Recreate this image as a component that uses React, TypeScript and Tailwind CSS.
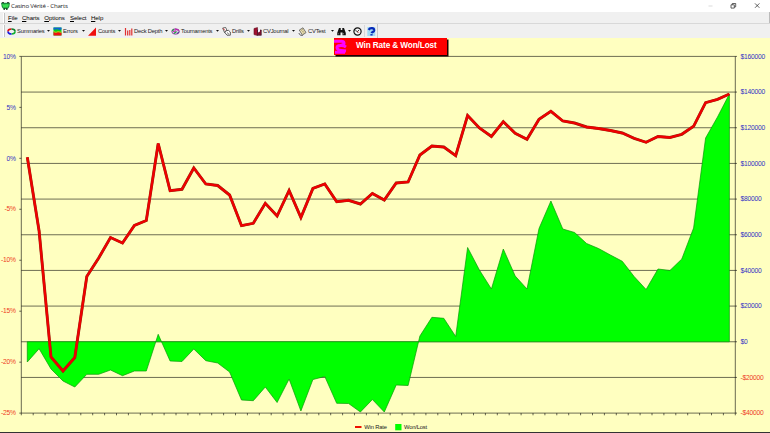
import type { ReactNode } from 'react';

const STEP = 11.9;
const LEFT = 21.3;
const RIGHT = 735.3;
const TOP = 18.4;
const ROW = 35.67;
const ZERO = TOP + ROW * 8;

// chart y positions, one per session
const winRate = [
  119.3, 193, 319, 333, 319.5, 238.5, 220, 199.5, 205, 187.5, 182.5, 105.5, 152.7, 151.3, 130,
  146, 147.5, 157, 187.7, 185.3, 165.3, 178, 152.5, 179.5, 150.5, 146, 163.7, 162.3, 166, 155.5,
  162, 145, 144, 117, 108, 109, 117.7, 77.5, 90, 98.5, 83.7, 95.3, 101.3, 81.3, 73.3,
  83, 85, 89, 90.5, 92.5, 95, 100.3, 104.3, 98.5, 99.5, 96.3, 88.3, 64.7, 61.3, 56,
];

const wonLost = [
  324, 310.7, 331, 343, 349, 336.3, 336.3, 332, 337.7, 333, 333, 296.3, 323, 323.5, 311,
  322.7, 325, 334, 362, 362.7, 349, 364.5, 341, 373, 341.5, 338.5, 365.3, 365.5, 374, 361.5,
  374, 347, 347.5, 298, 279.3, 280.3, 298.5, 209.5, 232, 251, 211, 238, 251, 190.5, 163,
  191, 194.5, 205.5, 210.5, 217, 223.3, 238.5, 251.5, 231, 232.5, 221, 190, 100, 79, 56,
];

const toPoints = (ys: number[]) =>
  ys.map((y, i) => `${(LEFT + STEP / 2 + i * STEP).toFixed(1)},${y}`).join(' ');

const percents = [10, 5, 0, -5, -10, -15, -20, -25];
const dollars = [160000, 140000, 120000, 100000, 80000, 60000, 40000, 20000, 0, -20000, -40000];

function Icon({ children }: { children: ReactNode }) {
  return (
    <svg className="h-[9px] w-[9px] shrink-0" viewBox="0 0 9 9" fill="none">
      {children}
    </svg>
  );
}

const tools = [
  {
    label: 'Summaries',
    width: 'w-[46px]',
    icon: (
      <>
        <path d="M1 4.5C1 2.8 2.5 2 4.5 2" stroke="#e01010" strokeWidth="1.6" />
        <path d="M4.5 2C6.8 2 8 3 8 4.5" stroke="#108030" strokeWidth="1.6" />
        <path d="M8 4.5C8 6.2 6.5 7 4.5 7" stroke="#10b030" strokeWidth="1.6" />
        <path d="M4.5 7C2.2 7 1 6 1 4.5" stroke="#1818e0" strokeWidth="1.6" />
      </>
    ),
  },
  {
    label: 'Errors',
    width: 'w-[35px]',
    icon: (
      <>
        <path d="M.5.5h8v8h-8z" fill="#00d020" />
        <path d="M.5.5h8v2l-2 .5-2-.7-4 .4z" fill="#1060d8" />
        <path d="M.5 5l2.5.7 2-.6 3.5.6v2.8h-8z" fill="#f01010" />
        <path d="M.5 4.6l2.5.7 2-.6 3.5.6" stroke="#d0c010" />
      </>
    ),
  },
  { label: 'Counts', width: 'w-[36px]', icon: <path d="M0 8.7L8 .6v8.1z" fill="#f01010" /> },
  {
    label: 'Deck Depth',
    width: 'w-[47px]',
    icon: <path d="M1.5 1v7.5M3.7 3.5v5M5.8 3v5.5M7.8 1.5v7" stroke="#e03030" strokeWidth="1.2" />,
  },
  {
    label: 'Tournaments',
    width: 'w-[51px]',
    icon: (
      <>
        <ellipse cx="4.6" cy="4.5" rx="3.8" ry="2.7" fill="#d8d8e8" stroke="#9040a0" />
        <path d="M1 4l2-1.7M3 6.5l2.5-2" stroke="#20a040" strokeWidth="1.3" />
        <path d="M4 2l3.8 1.4M2 4.5l3-.7" stroke="#c020b0" strokeWidth="1.2" />
        <path d="M6 6.5l2-1.7" stroke="#303080" />
      </>
    ),
  },
  {
    label: 'Drills',
    width: 'w-[31px]',
    icon: (
      <>
        <path d="M.7 1l3-.5 1.3 3-2.5 2z" fill="#fff" stroke="#444" strokeWidth=".8" />
        <path d="M1.2 1.4l1.6 2" stroke="#d03030" />
        <path d="M3.4 4l3-.7L8.3 5v3.2H5L3 5.7z" fill="#fff" stroke="#333" strokeWidth=".8" />
        <path d="M5 5.5l2 1.8" stroke="#333" strokeWidth=".7" />
      </>
    ),
  },
  {
    label: 'CVJournal',
    width: 'w-[45px]',
    icon: (
      <>
        <path d="M1 1.5L4.5.6v7.9L1 7.6z" fill="#a01030" stroke="#601020" strokeWidth=".6" />
        <path d="M4.5 3h3.8v5.3H4.5z" fill="#801030" stroke="#301020" strokeWidth=".6" />
        <path d="M5 2.5L7 1.5v3L5 5.5z" fill="#f4f4ff" />
      </>
    ),
  },
  {
    label: 'CVTest',
    width: 'w-[38.5px]',
    icon: (
      <>
        <path d="M1.3 3L5 .8l3 4.8-3.6 2.5z" fill="#eee4b8" stroke="#555" strokeWidth=".8" />
        <path d="M3 3.6l2-1.2M4 5l2-1.2M4.8 6.5l1.6-1" stroke="#887850" strokeWidth=".6" />
        <path d="M.8 6l1.5 2.2 2.4.3" stroke="#444" strokeWidth=".8" />
      </>
    ),
  },
];

function Arrow() {
  return (
    <svg className="h-[2px] w-[3px] shrink-0" viewBox="0 0 3 2">
      <path d="M0 0h3L1.5 1.8z" fill="#111" />
    </svg>
  );
}

function Chart() {
  return (
    <svg className="block h-[394px] w-[770px]" viewBox="0 0 770 394" fontSize="6.7" letterSpacing="-.2">
      <g stroke="#000" strokeOpacity=".68" strokeWidth=".85">
        {dollars.map((d, i) => (
          <path key={d} d={`M${LEFT} ${TOP + i * ROW}H${RIGHT + 1.7}`} />
        ))}
      </g>

      <polygon
        points={`${LEFT + STEP / 2},${ZERO} ${toPoints(wonLost)} ${RIGHT - STEP / 2},${ZERO}`}
        fill="#00ff00"
        stroke="#089808"
        strokeWidth=".7"
      />

      <g stroke="#000" strokeOpacity=".7" strokeWidth=".85">
        <path d={`M${LEFT} ${TOP}V${TOP + ROW * 10}M${RIGHT} ${TOP}V${TOP + ROW * 10}`} />
        {percents.map((p, i) => (
          <path key={p} d={`M${LEFT - 2} ${TOP + i * 50.96}h2`} />
        ))}
        {Array.from({ length: 61 }, (_, i) => (
          <path key={i} d={`M${LEFT + i * STEP} ${TOP + ROW * 10}v2.2`} />
        ))}
      </g>

      <polyline points={toPoints(winRate)} fill="none" stroke="#8a2a10" strokeWidth="2.9" />
      <polyline points={toPoints(winRate)} fill="none" stroke="#ee0000" strokeWidth="2.3" />

      {percents.map((p, i) => (
        <text key={p} x="15.8" y={TOP + i * 50.96 + 2.2} textAnchor="end" fill={p < 0 ? '#ee3b22' : '#3030c4'}>
          {p}%
        </text>
      ))}
      {dollars.map((d, i) => (
        <text key={d} x="740.5" y={TOP + i * ROW + 2.2} fill={d < 0 ? '#ee3b22' : '#3030c4'}>
          {`${d < 0 ? '-' : ''}$${Math.abs(d)}`}
        </text>
      ))}

      <g fontSize="5.8" letterSpacing="-.18" fill="#222">
        <path d="M355 389h6.5" stroke="#ee1100" strokeWidth="2" />
        <text x="364.3" y="391.1">Win Rate</text>
        <path d="M395.2 386h6.3v6.3h-6.3z" fill="#00ff00" />
        <text x="404" y="391.1">Won/Lost</text>
      </g>
    </svg>
  );
}

export default function App() {
  return (
    <div className="flex h-[433px] w-[770px] flex-col overflow-hidden border-b border-[#333] bg-[#ffffc0] font-['Liberation_Sans',Arial,sans-serif] text-black">
      <header className="flex h-[12px] shrink-0 items-center bg-white pl-[1px]">
        <svg className="h-[9px] w-[9px]" viewBox="0 0 9 9">
          <path d="M0 .7h9L8.3 5 6 8 4.5 6.5 3 8 .8 5z" fill="#189040" />
          <path d="M1 2l2.5.5L5.5 2 8 2.4 6.7 5.6H2.3z" fill="#38e050" />
          <path d="M1 .7h2M6 .7h2M3 8l1-2M6 8L5 6" stroke="#203020" />
        </svg>
        <h1 className="pt-[1px] pl-[1px] font-['Open_Sans',sans-serif] text-[6.1px] leading-none tracking-[-0.2px] text-[#222]">
          Casino Vérité - Charts
        </h1>
        <svg className="ml-auto h-[8px] w-[64px]" viewBox="0 0 64 8" fill="none" stroke="#222" strokeWidth=".7">
          <path d="M2.5 4h4" stroke="#ccc" />
          <path d="M25 2.8h3.3v3.3H25zM26.3 2.8V1.5h3.4v3.4h-1.4" />
          <path d="M49 1.4l4.4 4.4M53.4 1.4L49 5.8" />
        </svg>
      </header>

      <nav className="flex h-[12px] shrink-0 items-center border-b border-[#d8d8d8] bg-[#f0f0f0] pl-[3px] text-[6.1px] leading-none tracking-[-0.08px]">
        <span className="mr-[3px] h-[10px] w-[2px] border-r border-[#c4c4c4] bg-white" />
        <span className="w-[14px] pt-[1.5px]"><u>F</u>ile</span>
        <span className="w-[22.3px] pt-[1.5px]"><u>C</u>harts</span>
        <span className="w-[25.7px] pt-[1.5px]"><u>O</u>ptions</span>
        <span className="w-[21px] pt-[1.5px]"><u>S</u>elect</span>
        <span className="pt-[1.5px]"><u>H</u>elp</span>
        <span className="ml-auto h-full w-px bg-[#bbb]" />
      </nav>

      <div className="flex h-[14px] shrink-0 bg-[#f0f0f0]">
        <div className="flex h-full w-[378px] items-center border-r border-[#c8c8c8] pl-[3px]">
          <span className="mr-[2px] h-[12px] w-[2px] shrink-0 border-r border-[#c4c4c4] bg-white" />
          {tools.map((tool) => (
            <button key={tool.label} className={`flex shrink-0 items-center pr-[3px] ${tool.width}`}>
              <Icon>{tool.icon}</Icon>
              <span className="mr-auto pt-[1px] pl-[1px] text-[5.8px] leading-none tracking-[-0.2px] whitespace-nowrap text-[#222]">
                {tool.label}
              </span>
              <Arrow />
            </button>
          ))}
          <button className="flex w-[16px] shrink-0 items-center gap-[2px]">
            <Icon>
              <path d="M2 1h1.7v2h1.6V1H7l1.8 5v2.3H5.5V5.6h-2v2.7H.2V6z" fill="#111" />
              <path d="M1.3 6.3v1M6.5 6.3v1" stroke="#ddd" strokeWidth=".6" />
            </Icon>
            <Arrow />
          </button>
          <Icon>
            <circle cx="4.5" cy="4.5" r="3.6" fill="#f6f6f6" stroke="#111" strokeWidth="1.2" />
            <path d="M2.4 3.6l2.1.9 1.7-1.7M4.5 4.5v1" stroke="#111" strokeWidth=".8" />
            <path d="M4.5 4.3L6 5.8" stroke="#d02020" strokeWidth=".7" />
          </Icon>
          <span className="mx-[2px] h-[12px] w-px shrink-0 bg-[#d8d8d8]" />
          <Icon>
            <path d="M.3 0h8v9h-8z" fill="#a4dcf4" />
            <path d="M1.6 2.9C3 .4 7.3.6 7.2 3.4 7.1 5 5 5 4.6 6.2" stroke="#0828b8" strokeWidth="2.2" />
            <path d="M3.4 7.8h2.2" stroke="#0828b8" strokeWidth="1.4" />
          </Icon>
        </div>
      </div>

      <main className="relative h-[394px] shrink-0">
        <Chart />
        <button className="absolute top-0 left-[333.5px] flex h-[17px] w-[113.5px] items-center bg-[#ff0000] text-[8.2px] font-bold tracking-[-0.1px] text-white shadow-[1.5px_1.5px_0_#200000]">
          <svg className="h-full w-[14px]" viewBox="0 0 14 17" fill="none">
            <path d="M0 3.2h7.5c3 0 3.5 3.2.5 3.7L5 8M12 9c-3-2-9-2-9 .8 0 3 6 2.8 9 3.2M1 14.2h10" stroke="#ff00ff" strokeWidth="3" />
          </svg>
          <span className="pl-[8.5px] leading-none whitespace-nowrap">Win Rate &amp; Won/Lost</span>
        </button>
      </main>
    </div>
  );
}
